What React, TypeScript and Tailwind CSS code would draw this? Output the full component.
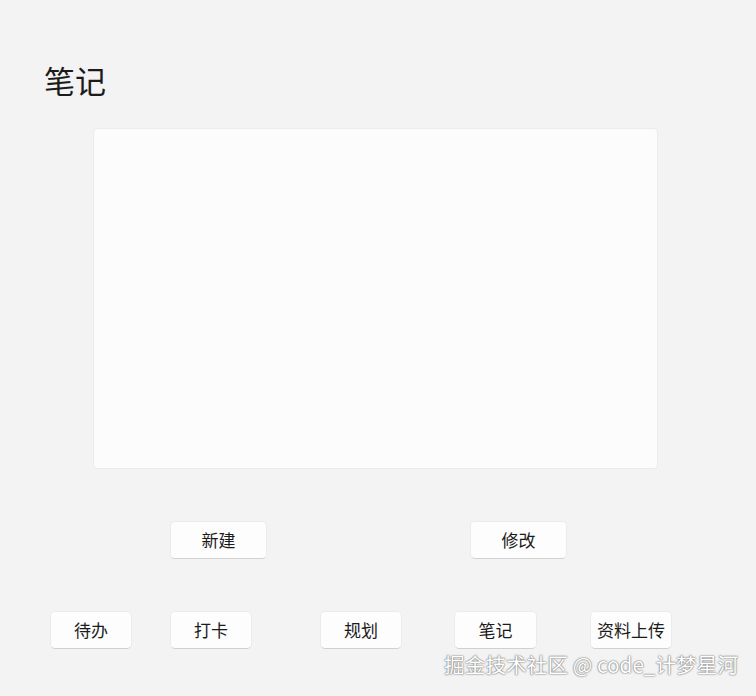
import React from 'react'

function Btn({ label, className = '' }: { label: string; className?: string }) {
    return (
        <button
            className={`h-[38px] rounded-[5px] border border-[#ebebeb] border-b-[#d0d0d0] bg-[#fdfdfd] text-[17px] text-[#1b1b1b] ${className}`}
        >
            {label}
        </button>
    )
}

export default function App() {
    return (
        <div
            className="relative h-[696px] w-[756px] overflow-hidden bg-[#f3f3f3]"
            style={{ fontFamily: '"Noto Sans CJK SC", "Noto Sans", sans-serif' }}
        >
            <div className="flex flex-col pt-[58px]">
                <h1 className="ml-[44px] text-[31px] leading-[44px] text-[#1b1b1b]">笔记</h1>
                <div className="ml-[93px] mt-[26px] h-[341px] w-[565px] rounded-[4px] border border-[#ebebeb] bg-[#fcfcfc]" />

                <div className="mt-[52px] flex">
                    <Btn label="新建" className="ml-[170px] w-[97px]" />
                    <Btn label="修改" className="ml-[203px] w-[97px]" />
                </div>

                <div className="mt-[52px] flex">
                    <Btn label="待办" className="ml-[50px] w-[82px]" />
                    <Btn label="打卡" className="ml-[38px] w-[82px]" />
                    <Btn label="规划" className="ml-[68px] w-[82px]" />
                    <Btn label="笔记" className="ml-[52px] w-[83px]" />
                    <Btn label="资料上传" className="ml-[53px] w-[82px]" />
                </div>
            </div>

            <div
                className="absolute left-[444px] top-[650px] text-[20.7px] leading-[28px] text-white"
                style={{ textShadow: '0 0 2px #6b6b6b, 0 0 1px #6b6b6b' }}
            >
                掘金技术社区 @ code_计梦星河
            </div>
        </div>
    )
}
